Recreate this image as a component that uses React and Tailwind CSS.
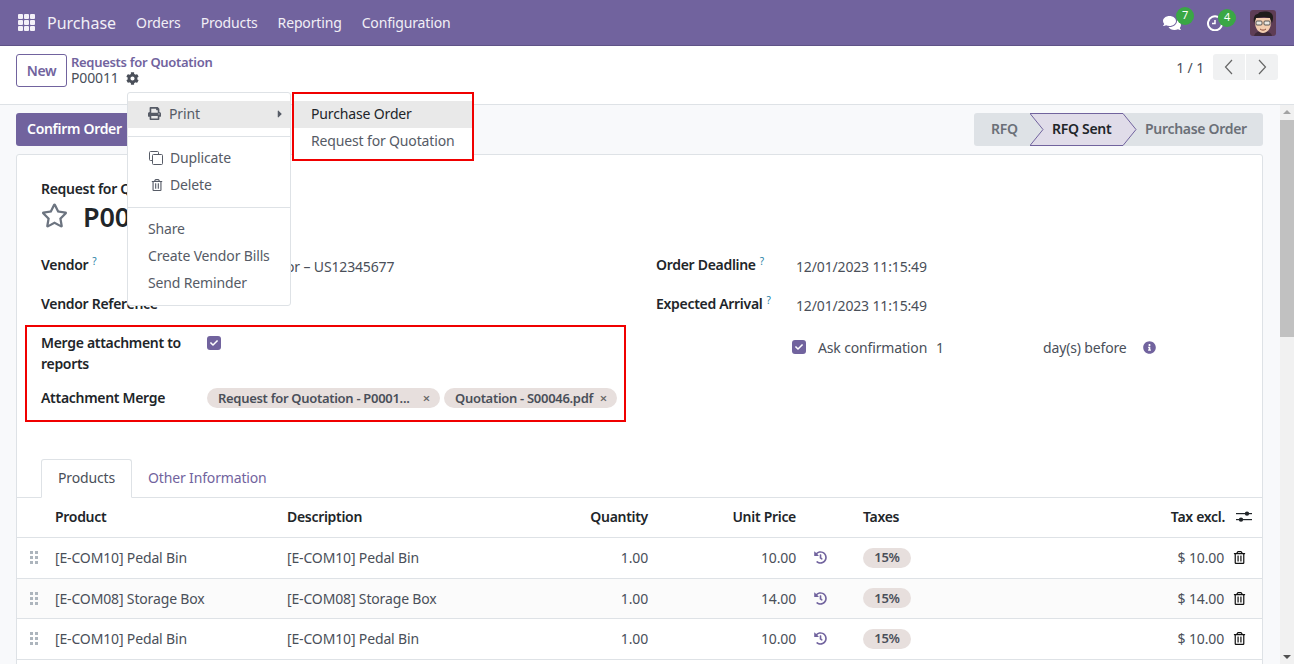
import React from 'react';
import { FaCog, FaPrint, FaRegTrashAlt, FaRegStar, FaInfoCircle, FaHistory, FaComments, FaCheck, FaCaretRight } from 'react-icons/fa';

const rows = [
  { product: '[E-COM10] Pedal Bin', qty: '1.00', price: '10.00', total: '$ 10.00', h: 'h-[41px]', bg: 'bg-white' },
  { product: '[E-COM08] Storage Box', qty: '1.00', price: '14.00', total: '$ 14.00', h: 'h-[40px]', bg: 'bg-[#fbfbfb]' },
  { product: '[E-COM10] Pedal Bin', qty: '1.00', price: '10.00', total: '$ 10.00', h: 'h-[41px]', bg: 'bg-white' },
];

const Help = () => <sup className="ml-[4px] text-[10px] text-[#1f7fa5] font-normal">?</sup>;

const Check = () => (
  <span className="w-[14px] h-[14px] rounded-[3px] bg-[#71639e] flex items-center justify-center text-white text-[8px]">
    <FaCheck />
  </span>
);

const Chip = ({ label, className }) => (
  <span className={`h-[20px] pt-[1px] rounded-full bg-[#e7dfdd] pl-[11px] pr-[10px] flex items-center justify-between text-[13px] font-semibold tracking-[-0.3px] text-[#4a4f59] ${className}`}>
    <span className="whitespace-nowrap">{label}</span>
    <span className="text-[13px] text-[#666] leading-none">×</span>
  </span>
);

const Avatar = () => (
  <svg width="26" height="26" viewBox="0 0 26 26" className="rounded-[3px]">
    <rect width="26" height="26" fill="#5e3d55" />
    <path d="M4 26c1-4 5-5 9-5s8 1 9 5z" fill="#3f2a3a" />
    <path d="M5 12c0 7 4 11 8 11s8-4 8-11l-1-4H6z" fill="#f3cdb0" />
    <path d="M4 13C3 7 5 4 8 4c1-3 10-3 13-1 3 2 2 7 1 10l-2-5-6-1-8 1z" fill="#1f1c1b" />
    <rect x="6" y="11" width="6" height="4" rx="1" fill="#e9e6e0" stroke="#333" strokeWidth="0.8" />
    <rect x="14" y="11" width="6" height="4" rx="1" fill="#e9e6e0" stroke="#333" strokeWidth="0.8" />
    <path d="M10 19c2 1.500 4 1.500 6 0" stroke="#8a4b3a" strokeWidth="1" fill="none" />
  </svg>
);

const Clock = () => (
  <svg width="16" height="16" viewBox="0 0 16 16" fill="none" stroke="#fff" strokeWidth="2">
    <path d="M11 2a7 7 0 1 0 4 6" />
    <path d="M8 5v3.500H5" strokeWidth="1.500" />
  </svg>
);

const CloneIcon = () => (
  <svg width="14" height="14" viewBox="0 0 14 14" fill="none" stroke="currentColor" strokeWidth="1">
    <path d="M9.500 3V1.500a1 1 0 0 0-1-1h-7a1 1 0 0 0-1 1v7a1 1 0 0 0 1 1H3" />
    <rect x="3.500" y="3.500" width="10" height="10" rx="1" />
  </svg>
);

const Sliders = () => (
  <svg width="16" height="14" viewBox="0 0 16 14" fill="#212529">
    <rect x="0" y="3" width="16" height="1.200" />
    <rect x="0" y="9" width="16" height="1.200" />
    <circle cx="11" cy="3.600" r="2.200" />
    <circle cx="5" cy="9.600" r="2.200" />
  </svg>
);

const Chevron = ({ d }) => (
  <svg width="12" height="16" viewBox="0 0 12 16" fill="none" stroke="#666" strokeWidth="1.200">
    <path d={d} />
  </svg>
);

function Navbar() {
  return (
    <header className="h-[46px] bg-[#71639e] border-b border-[#5f5387] flex items-center text-white shrink-0">
      <div className="ml-[18px] grid grid-cols-3 gap-[1.500px] w-[17px] h-[17px]">
        {Array.from({ length: 9 }).map((_, i) => (
          <span key={i} className="bg-[#f3f0f8] rounded-[1px]" />
        ))}
      </div>
      <span className="ml-[12px] text-[16px] tracking-normal text-[#f1eff6]">Purchase</span>
      <nav className="ml-[20px] flex gap-[20px] text-[14px] text-[#f1eff6]">
        <span>Orders</span>
        <span>Products</span>
        <span>Reporting</span>
        <span>Configuration</span>
      </nav>
      <div className="ml-auto flex items-center">
        <div className="relative w-[18px] text-[18px] mr-[26px]">
          <FaComments />
          <span className="absolute -top-[7px] left-[13px] w-[18px] h-[18px] rounded-full bg-[#3aa745] text-[11px] flex items-center justify-center">7</span>
        </div>
        <div className="relative w-[16px] mr-[27px] flex">
          <Clock />
          <span className="absolute -top-[6px] left-[11px] w-[18px] h-[18px] rounded-full bg-[#3aa745] text-[11px] flex items-center justify-center">4</span>
        </div>
        <div className="mr-[18px] flex"><Avatar /></div>
      </div>
    </header>
  );
}

function ControlPanel() {
  return (
    <div className="h-[59px] bg-white border-b border-[#dee2e6] flex items-start pl-[16px] pr-[16px] pt-[8px] shrink-0">
      <button className="w-[51px] h-[33px] border border-[#71639e] rounded-[3px] text-[14px] font-semibold tracking-[-0.3px] text-[#71639e] text-center">New</button>
      <div className="ml-[4px] leading-[16px]">
        <div className="text-[13px] font-semibold tracking-[-0.3px] text-[#71639e]">Requests for Quotation</div>
        <div className="flex items-center text-[14px] text-[#4a4f59]">
          P00011
          <FaCog className="ml-[7px] text-[13px] text-[#4a4f59]" />
        </div>
      </div>
      <div className="ml-auto flex items-center h-[26px]">
        <span className="text-[14px] text-[#4a4f59] mr-[9px]">1 / 1</span>
        <div className="flex gap-[1px]">
          <span className="w-[32px] h-[26px] rounded-l-[3px] bg-[#f0f1f2] flex items-center justify-center"><Chevron d="M9 1 2.500 8 9 15" /></span>
          <span className="w-[32px] h-[26px] rounded-r-[3px] bg-[#f0f1f2] flex items-center justify-center"><Chevron d="M3 1 9.500 8 3 15" /></span>
        </div>
      </div>
    </div>
  );
}

function StatusBar() {
  return (
    <div className="flex h-[33px] rounded-[3px] bg-[#dee2e6] text-[14px] font-semibold tracking-[-0.3px] text-[#6b7078] items-center pb-[2px]">
      <span className="w-[56px] pl-[17px]">RFQ</span>
      <span className="relative w-[107px] h-[33px] -mb-[2px] flex items-center pl-[22px] pb-[2px] text-[#212529]">
        <svg className="absolute inset-0" width="107" height="33" viewBox="0 0 107 33" fill="none">
          <path d="M0 .500H93L106 16.500 93 32.500H0L13 16.500Z" fill="#e0dce9" stroke="#71639e" />
        </svg>
        <span className="relative">RFQ Sent</span>
      </span>
      <span className="w-[126px] pl-[8px] whitespace-nowrap">Purchase Order</span>
    </div>
  );
}

function ActionMenu() {
  return (
    <>
      <div className="absolute left-[127px] top-[92px] w-[164px] h-[214px] bg-white border border-[#dee2e6] rounded-[3px] text-[14px] text-[#565b66] z-20 pt-[8px]">
        <div className="h-[27px] pb-[2px] bg-[#e9e9e9] flex items-center pl-[20px] pr-[4px]">
          <span className="w-[21px]"><FaPrint className="text-[13px]" /></span>
          Print
          <FaCaretRight className="ml-auto text-[12px]" />
        </div>
        <div className="border-t border-[#dee2e6] mt-[8px] mb-[8px]" />
        <div className="h-[27px] pb-[2px] flex items-center pl-[21px]"><span className="w-[21px]"><CloneIcon /></span>Duplicate</div>
        <div className="h-[27px] pb-[2px] flex items-center pl-[23px]"><span className="w-[19px]"><FaRegTrashAlt className="text-[12px]" /></span>Delete</div>
        <div className="border-t border-[#dee2e6] mt-[8px] mb-[8px]" />
        <div className="h-[27px] pb-[2px] flex items-center pl-[20px]">Share</div>
        <div className="h-[27px] pb-[2px] flex items-center pl-[20px]">Create Vendor Bills</div>
        <div className="h-[27px] pb-[2px] flex items-center pl-[20px]">Send Reminder</div>
      </div>
      <div className="absolute left-[292px] top-[92px] w-[182px] h-[69px] bg-white border-2 border-[#f00000] text-[14px] text-[#565b66] z-20 pt-[7px]">
        <div className="h-[27px] pb-[2px] bg-[#e9e9e9] flex items-center pl-[17px] text-[#212529]">Purchase Order</div>
        <div className="h-[27px] pb-[2px] flex items-center pl-[17px]">Request for Quotation</div>
      </div>
    </>
  );
}

function FormFields() {
  return (
    <div className="flex">
      <div className="w-[615px] shrink-0">
        <div className="h-[39px] flex items-start">
          <label className="w-[166px] font-semibold tracking-[-0.3px] text-[#212529]">Vendor<Help /></label>
          <span className="text-[#4a4f59] mt-[2px] ml-[17px]">Test Vendor – US12345677</span>
        </div>
        <div className="h-[32px] font-semibold tracking-[-0.3px] text-[#212529]">Vendor Reference</div>
        <div className="-ml-[16px] w-[601px] h-[97px] border-2 border-[#f00000] pl-[14px] pt-[5px]">
          <div className="flex h-[46px]">
            <label className="w-[166px] font-semibold tracking-[-0.3px] text-[#212529] leading-[21px]">Merge attachment to reports</label>
            <span className="mt-[4px]"><Check /></span>
          </div>
          <div className="flex items-center h-[38px]">
            <label className="w-[166px] font-semibold tracking-[-0.3px] text-[#212529]">Attachment Merge</label>
            <div className="flex gap-[4px] mt-[2px]">
              <Chip label="Request for Quotation - P0001..." className="w-[233px]" />
              <Chip label="Quotation - S00046.pdf" className="w-[173px]" />
            </div>
          </div>
        </div>
      </div>
      <div className="text-[#4a4f59]">
        <div className="h-[39px] flex items-start">
          <label className="w-[140px] font-semibold tracking-[-0.3px] text-[#212529]">Order Deadline<Help /></label>
          <span className="mt-[2px]">12/01/2023 11:15:49</span>
        </div>
        <div className="h-[36px] flex items-start">
          <label className="w-[140px] font-semibold tracking-[-0.3px] text-[#212529]">Expected Arrival<Help /></label>
          <span className="mt-[2px]">12/01/2023 11:15:49</span>
        </div>
        <div className="ml-[136px] mt-[6px] flex items-center h-[24px]">
          <Check />
          <span className="ml-[12px] w-[118px]">Ask confirmation</span>
          <span className="w-[107px]">1</span>
          <span className="w-[100px]">day(s) before</span>
          <FaInfoCircle className="text-[13px] text-[#71639e]" />
        </div>
      </div>
    </div>
  );
}

function Table() {
  return (
    <div className="text-[14px]">
      <div className="h-[40px] pb-[2px] flex items-center border-b border-[#dee2e6] font-semibold tracking-[-0.3px] text-[#212529] pl-[38px]">
        <span className="w-[232px]">Product</span>
        <span className="w-[232px]">Description</span>
        <span className="w-[129px] text-right">Quantity</span>
        <span className="w-[148px] text-right">Unit Price</span>
        <span className="ml-[67px]">Taxes</span>
        <span className="ml-auto">Tax excl.</span>
        <span className="ml-[11px] mr-[10px] flex"><Sliders /></span>
      </div>
      {rows.map((row, i) => (
        <div key={i} className={`${row.h} ${row.bg} pb-[1px] flex items-center border-b border-[#dee2e6] text-[#4a4f59]`}>
          <span className="ml-[13px] w-[8px] grid grid-cols-2 gap-[2px] mr-[17px]">
            {Array.from({ length: 6 }).map((_, j) => (
              <span key={j} className="w-[3px] h-[3px] bg-[#adb5bd]" />
            ))}
          </span>
          <span className="w-[232px]">{row.product}</span>
          <span className="w-[232px]">{row.product}</span>
          <span className="w-[129px] text-right">{row.qty}</span>
          <span className="w-[148px] text-right">{row.price}</span>
          <FaHistory className="ml-[18px] text-[13px] text-[#71639e]" />
          <span className="ml-[36px] w-[48px] h-[20px] pt-[1px] rounded-full bg-[#e7dfdd] flex items-center justify-center text-[13px] font-semibold tracking-[-0.3px]">15%</span>
          <span className="ml-auto mr-[9px]">{row.total}</span>
          <FaRegTrashAlt className="mr-[16px] text-[13px] text-[#111]" />
        </div>
      ))}
    </div>
  );
}

export default function App() {
  return (
    <div className="relative h-[664px] w-[1294px] overflow-hidden flex flex-col bg-[#f8f9fb] text-[14px] tracking-[-0.15px] font-['Noto_Sans',sans-serif]">
      <Navbar />
      <ControlPanel />
      <div className="flex flex-1 min-h-0">
        <main className="flex-1 min-w-0 pl-[16px] pr-[17px] pt-[8px] overflow-hidden">
          <div className="flex justify-between">
            <button className="h-[33px] w-[116px] bg-[#71639e] text-white font-semibold tracking-[-0.3px] rounded-[3px] text-left pl-[11px] pb-[2px]">Confirm Order</button>
            <StatusBar />
          </div>
          <div className="mt-[8px] bg-white border border-[#dee2e6] rounded-[3px] h-[600px]">
            <div className="pl-[24px] pt-[25px] pb-[37px]">
              <div className="font-semibold tracking-[-0.3px] text-[#212529] leading-[18px]">Request for Quotation</div>
              <div className="flex items-center h-[38px] mb-[18px]">
                <FaRegStar className="-mt-[3px] text-[27px] text-[#6c7480]" />
                <span className="ml-[15px] text-[27px] font-semibold text-[#212529]">P00011</span>
              </div>
              <FormFields />
            </div>
            <div className="flex h-[39px] pl-[24px] border-b border-[#dee2e6] text-[14px]">
              <div className="w-[91px] h-[39px] pb-[2px] bg-white border border-[#dee2e6] border-b-white rounded-t-[3px] flex items-center justify-center text-[#4a4f59]">Products</div>
              <div className="ml-[16px] pb-[2px] flex items-center text-[#71639e]">Other Information</div>
            </div>
            <Table />
          </div>
        </main>
        <div className="w-[14px] bg-[#f1f1f1] shrink-0 flex flex-col items-center">
          <span className="mt-[5px] w-0 h-0 border-x-[4px] border-x-transparent border-b-[4px] border-b-[#a3a3a3]" />
          <span className="mt-[6px] w-full h-[217px] bg-[#c1c1c1]" />
          <span className="mt-auto mb-[5px] w-0 h-0 border-x-[4px] border-x-transparent border-t-[4px] border-t-[#505050]" />
        </div>
      </div>
      <ActionMenu />
    </div>
  );
}
